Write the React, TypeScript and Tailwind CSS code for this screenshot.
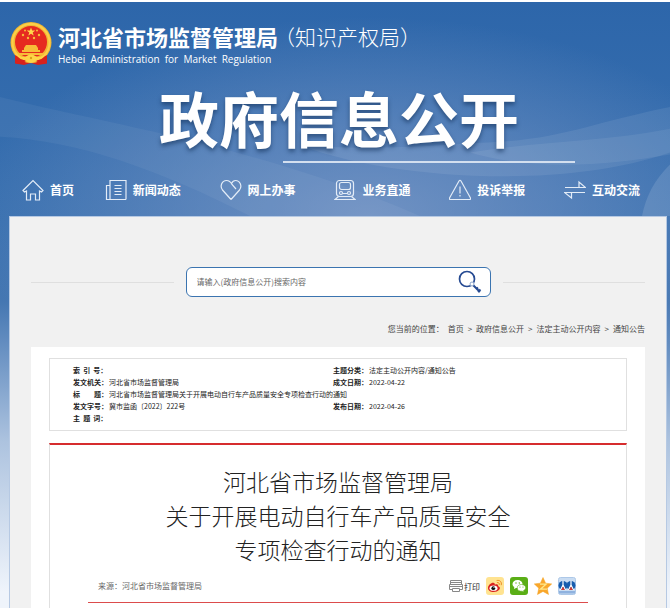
import type { ReactNode } from "react"

interface NavItem {
  label: string
  icon: ReactNode
}

const navItems: NavItem[] = [
  {
    label: "首页",
    icon: <path d="M1 11.500 11 1.500l10 10-1.500 1.500-2-1v9h-4v-6h-5v6h-4v-9l-2 1z" />,
  },
  {
    label: "新闻动态",
    icon: <path d="M5 20.500V1.500h16v19M21 20.500H1.500v-14H5M9.500 6.500h7M9.500 9.500h7M9.500 12.500h7M9.500 15.500h7" />,
  },
  {
    label: "网上办事",
    icon: <path d="M11 20.500 2.500 11C-.5 7 2 1.500 6.500 1.500c3 0 4.500 2 5.500 4l4 4.500M11.500 4.500c1-2 2-3 4-3C20 1.500 22.500 7 19.500 11L11 20.500" />,
  },
  {
    label: "业务直通",
    icon: (
      <>
        <rect x="2.500" y="1.500" width="17" height="16" rx="3" />
        <rect x="5.500" y="3.500" width="11" height="7" rx="2" />
        <circle cx="7" cy="14" r="1.500" />
        <circle cx="15" cy="14" r="1.500" />
        <path d="M4.500 17.500 1 20.500h20l-3.500-3M9 14.500h4" />
      </>
    ),
  },
  {
    label: "投诉举报",
    icon: <path d="M10 2q1-1.500 2 0l9.500 17q.5 1.500-1 1.500h-19q-1.500 0-1-1.500zM11 7.500v7M11 16v1.500" />,
  },
  {
    label: "互动交流",
    icon: <path d="M1 8.500h20.500L15 3v5.500M21 13.500H.5L7.500 19v-5.500" />,
  },
]

const breadcrumbs = ["首页", "政府信息公开", "法定主动公开内容", "通知公告"]

function Emblem() {
  return (
    <svg viewBox="0 0 42 44" className="h-11 w-[42px] shrink-0" aria-hidden="true">
      <path d="M5 31h32v10.500l-9 1.500-7-2-7 2-9-1.500z" fill="#d8221c" />
      <circle cx="21" cy="20.500" r="20.500" fill="#f2b632" />
      <circle cx="21" cy="20.500" r="18.500" fill="none" stroke="#fbd04a" strokeWidth="2" />
      <circle cx="21" cy="20" r="16" fill="#e62a20" />
      <path d="m21 5.500 1.100 3h3.200l-2.600 2 1 3.100-2.700-1.900-2.700 1.900 1-3.100-2.600-2h3.200z" fill="#ffd84d" />
      <g fill="#f7bd38">
        <circle cx="15" cy="8.500" r="1" />
        <circle cx="13" cy="13" r="1.200" />
        <circle cx="18" cy="16" r="1.200" />
        <circle cx="24" cy="16" r="1.200" />
        <circle cx="29" cy="13" r="1.200" />
        <circle cx="27" cy="8.500" r="1" />
        <path d="M16 23h10l2 3v2h2v2H12v-2h2v-2zM8 31h26v2H8z" />
      </g>
      <path d="M5 32c6 4 10 3 12 2 2-2 6-2 8 0 2 1 6 2 12-2v4c-4 3-8 3-11 1 0 5-10 5-10 0-3 2-7 2-11-1z" fill="#ffd447" />
      <path d="M5 33v8l6 1 5-3zM37 33v8l-6 1-5-3z" fill="#d8221c" />
      <path d="M8 34c4 4 7 4 9 1M34 34c-4 4-7 4-9 1" fill="none" stroke="#ffd447" strokeWidth="1.500" />
      <circle cx="21" cy="36" r="1.200" fill="#d8a01c" />
    </svg>
  )
}

// Faint light bands behind the header
function Swoosh() {
  return (
    <svg viewBox="0 0 670 216" preserveAspectRatio="none" className="absolute inset-0 -z-10 h-full w-full" fill="#fff" aria-hidden="true">
      <path d="M670 106C590 122 560 140 480 142c-60 4-120 8-180 2 70 30 250 50 370 8z" opacity=".08" />
      <path d="M670 128C600 142 540 140 470 152c70 20 140 12 200 2z" opacity=".07" />
      <path d="M0 96c120 30 260 50 420 120H250C160 170 80 140 0 136z" opacity=".05" />
      <path d="M670 164c-16 16-24 32-28 52h28z" opacity=".12" />
    </svg>
  )
}

function Header() {
  return (
    <header className="relative isolate text-white">
      <Swoosh />
      <div className="flex items-start pt-5 pl-[10px]">
        <Emblem />
        <div className="ml-[6px]">
          <div className="flex items-center">
            <h1 className="text-[22px] leading-7 font-bold whitespace-nowrap">河北省市场监督管理局</h1>
            <span className="-ml-1 text-[21px] leading-7 font-light whitespace-nowrap">（知识产权局）</span>
          </div>
          <p className="font-['Open_Sans',sans-serif] text-[10px] leading-[18px] whitespace-pre">
            Hebei  Administration  for  Market  Regulation
          </p>
        </div>
      </div>

      <div className="mt-3 flex flex-col items-center pl-2">
        <h2 className="text-[60px] leading-[74px] font-bold whitespace-nowrap [text-shadow:0_3px_4px_rgba(20,50,90,0.6)]">
          政府信息公开
        </h2>
        <div className="mt-[7px] ml-[180px] h-[2px] w-[292px] bg-[#d3dfef]" />
      </div>

      <nav className="mt-4 pr-[30px] pb-[15px] pl-[22px]">
        <ul className="flex items-center justify-between text-[12px] leading-[22px] font-bold whitespace-nowrap">
          {navItems.map((item) => (
            <li key={item.label} className="first:-mr-2">
              <a href="#" className="flex items-center gap-[6px]">
                <svg viewBox="0 0 22 22" className="size-[22px]" fill="none" stroke="#e3ecf7" strokeWidth="1.200" aria-hidden="true">
                  {item.icon}
                </svg>
                {item.label}
              </a>
            </li>
          ))}
        </ul>
      </nav>
    </header>
  )
}

function SearchBar() {
  return (
    <form className="flex items-center gap-3" onSubmit={(e) => e.preventDefault()}>
      <div className="h-px flex-1 bg-[#dfdfdf]" />
      <div className="flex h-[30px] w-1/2 max-w-[305px] items-center rounded-md border border-[#3b74b0] bg-white pr-2 pl-[10px]">
        <input
          type="text"
          aria-label="搜索"
          placeholder="请输入(政府信息公开)搜索内容"
          className="min-w-0 flex-1 text-[8px] outline-none placeholder:text-[#666]"
        />
        <button type="submit" aria-label="搜索">
          <svg viewBox="0 0 24 24" className="size-6" fill="none" stroke="#264a92" aria-hidden="true">
            <circle cx="9" cy="9" r="7.500" strokeWidth="1.700" />
            <circle cx="14" cy="14" r="2" stroke="#8ea6cc" fill="#fff" />
            <path d="m15.500 15.500 6.500 6.500M18 19.500l2-2M20 22l2.500-2.500" strokeWidth="2" />
          </svg>
        </button>
      </div>
      <div className="h-px flex-1 bg-[#dfdfdf]" />
    </form>
  )
}

function InfoTable() {
  return (
    <div className="border border-[#e0e0e0] pt-[5px] pb-[6px] pl-[23px]">
      <table className="w-full table-fixed text-left text-[7px] leading-[12px] whitespace-pre [&_th]:p-0 [&_th]:font-bold [&_td]:p-0">
        <colgroup>
          <col className="w-9" />
          <col className="w-[224px]" />
          <col className="w-9" />
          <col />
        </colgroup>
        <tbody>
          <tr>
            <th>索  引  号：</th>
            <td />
            <th>主题分类：</th>
            <td>法定主动公开内容/通知公告</td>
          </tr>
          <tr>
            <th>发文机关：</th>
            <td>河北省市场监督管理局</td>
            <th>成文日期：</th>
            <td>2022-04-22</td>
          </tr>
          <tr>
            <th>标　　题：</th>
            <td colSpan={3}>河北省市场监督管理局关于开展电动自行车产品质量安全专项检查行动的通知</td>
          </tr>
          <tr>
            <th>发文字号：</th>
            <td>冀市监函〔2022〕222号</td>
            <th>发布日期：</th>
            <td>2022-04-26</td>
          </tr>
          <tr>
            <th>主  题  词：</th>
            <td colSpan={3} />
          </tr>
        </tbody>
      </table>
    </div>
  )
}

function ShareButtons() {
  return (
    <div className="flex items-center gap-[6px]">
      <button type="button" className="flex items-end text-[8px] leading-3 font-medium text-[#555]">
        <svg viewBox="0 0 14 14" className="mr-px size-[14px]" fill="none" stroke="#888" aria-hidden="true">
          <path d="M1.500 5V1.500h11V5M2 3.500h10M.5 5.500h13v5H.5zM.5 7.500h13" />
          <path d="M3.500 9.500h7v3h-7z" fill="#fff" />
        </svg>
        打印
      </button>
      <button type="button" aria-label="微博">
        <svg viewBox="0 0 18 18" className="size-[18px]">
          <rect width="18" height="18" rx="3" fill="#ffe390" />
          <path d="M2 11c0-3 4-6 6-5 1 0 .7 1.500.7 1.500s3-1 3.300.5c.2 1 0 1.200 1.500 2 1.500 1.500-1 5-6 5C4.500 15 2 13.500 2 11z" fill="#d9221f" />
          <ellipse cx="7.500" cy="11.200" rx="4" ry="2.600" fill="#fff" />
          <circle cx="7.300" cy="11.200" r="1.900" fill="#111" />
          <circle cx="8" cy="10.500" r=".6" fill="#fff" />
          <path d="M11 3.500c3-.7 5 1.500 4.300 4.300M11.300 5.500c1.500-.2 2.400.8 2 2" fill="none" stroke="#ed8c24" strokeLinecap="round" />
        </svg>
      </button>
      <button type="button" aria-label="微信">
        <svg viewBox="0 0 18 18" className="size-[18px]">
          <rect width="18" height="18" rx="3" fill="#5aae16" />
          <path d="M7.500 3C4.500 3 2.500 5 2.500 7c0 1.300.7 2.400 1.800 3.100L4 12l2-1.100c3.500.6 6.500-1.200 6.500-3.900 0-2.200-2.200-4-5-4z" fill="#fff" />
          <path d="M11.500 7.500c-2.500 0-4.300 1.500-4.300 3.400 0 2.100 2.300 3.700 5 3.300L14 15l-.4-1.500c1.300-.7 2.100-1.600 2.100-2.700 0-1.800-1.900-3.300-4.200-3.300z" fill="#fff" stroke="#5aae16" strokeWidth=".6" />
          <g fill="#5aae16">
            <circle cx="6" cy="6" r=".7" />
            <circle cx="9.300" cy="6" r=".7" />
            <circle cx="10" cy="10" r=".6" />
            <circle cx="13" cy="10" r=".6" />
          </g>
        </svg>
      </button>
      <button type="button" aria-label="QQ空间">
        <svg viewBox="0 0 18 18" className="size-[18px]">
          <path d="m9 .5 2.600 5.700 6.100.7-4.500 4.300 1.300 6.300L9 14.400l-5.500 3.100 1.300-6.300L.3 6.900l6.100-.7z" fill="#f9a72b" stroke="#f5a01f" strokeWidth=".5" strokeLinejoin="round" />
          <path d="M6 7.200h6l-5.500 5H13" fill="none" stroke="#ffe98a" strokeWidth="1.300" />
        </svg>
      </button>
      <button type="button" aria-label="人人网">
        <svg viewBox="0 0 18 18" className="size-[18px]">
          <rect x=".5" y=".5" width="17" height="17" rx="2" fill="#c9dcf2" stroke="#adc8e8" />
          <path d="M1 14h16v2.500H1z" fill="#8fb2df" />
          <circle cx="5" cy="8.500" r="4.500" fill="#165cae" />
          <circle cx="13" cy="8.500" r="4.500" fill="#165cae" />
          <path d="M5 4v4l-2.500 5M5 8l2.500 5M13 4v4l-2.500 5M13 8l2.500 5" fill="none" stroke="#fff" strokeWidth="1.200" />
          <path d="M5 9.500 6.800 13H3.200zM13 9.500l1.800 3.500h-3.600z" fill="#d63a2c" />
        </svg>
      </button>
    </div>
  )
}

function Article() {
  return (
    <article className="mt-3 border-x border-t-2 border-x-[#e0e0e0] border-t-[#d62c2e] pt-[19px] pb-10">
      <h3 className="text-center text-[23px] leading-[34px] font-light text-[#222]">
        河北省市场监督管理局
        <br />
        关于开展电动自行车产品质量安全
        <br />
        专项检查行动的通知
      </h3>
      <div className="mx-[38px] mt-[11px] flex h-[26px] items-start justify-between border-b border-[#dc4c4c] pr-3 pl-[10px]">
        <span className="text-[8px] leading-[18px] text-[#666]">来源：河北省市场监督管理局</span>
        <ShareButtons />
      </div>
    </article>
  )
}

export default function App() {
  return (
    <div className="h-screen overflow-hidden bg-white pt-[2px] font-['Noto_Sans_CJK_SC',sans-serif]">
      <div className="min-h-full bg-[radial-gradient(ellipse_400px_200px_at_55%_215px,rgba(135,160,203,0.7),rgba(120,150,198,0.5)_45%,transparent),linear-gradient(to_bottom,#2d66aa_0,#3a71b0_220px,#4577b2_300px,#6a92c3_350px,#adc3df_440px,#eff4fb_590px)]">
        <Header />
        <main className="mr-[3px] ml-[9px] border border-b-0 border-[#b6c9e3] bg-[#f1f1f1] px-[21px] pt-[50px]">
          <SearchBar />
          <div className="mt-[26px] flex justify-end gap-1 text-[8px] leading-3 text-[#444]">
            <span>您当前的位置：</span>
            {breadcrumbs.map((crumb, i) => (
              <span key={crumb} className="flex gap-1">
                {i > 0 && <span>&gt;</span>}
                <a href="#">{crumb}</a>
              </span>
            ))}
          </div>
          <div className="mt-3 bg-white px-[18px] pt-[11px] text-[#222]">
            <InfoTable />
            <Article />
          </div>
        </main>
      </div>
    </div>
  )
}
